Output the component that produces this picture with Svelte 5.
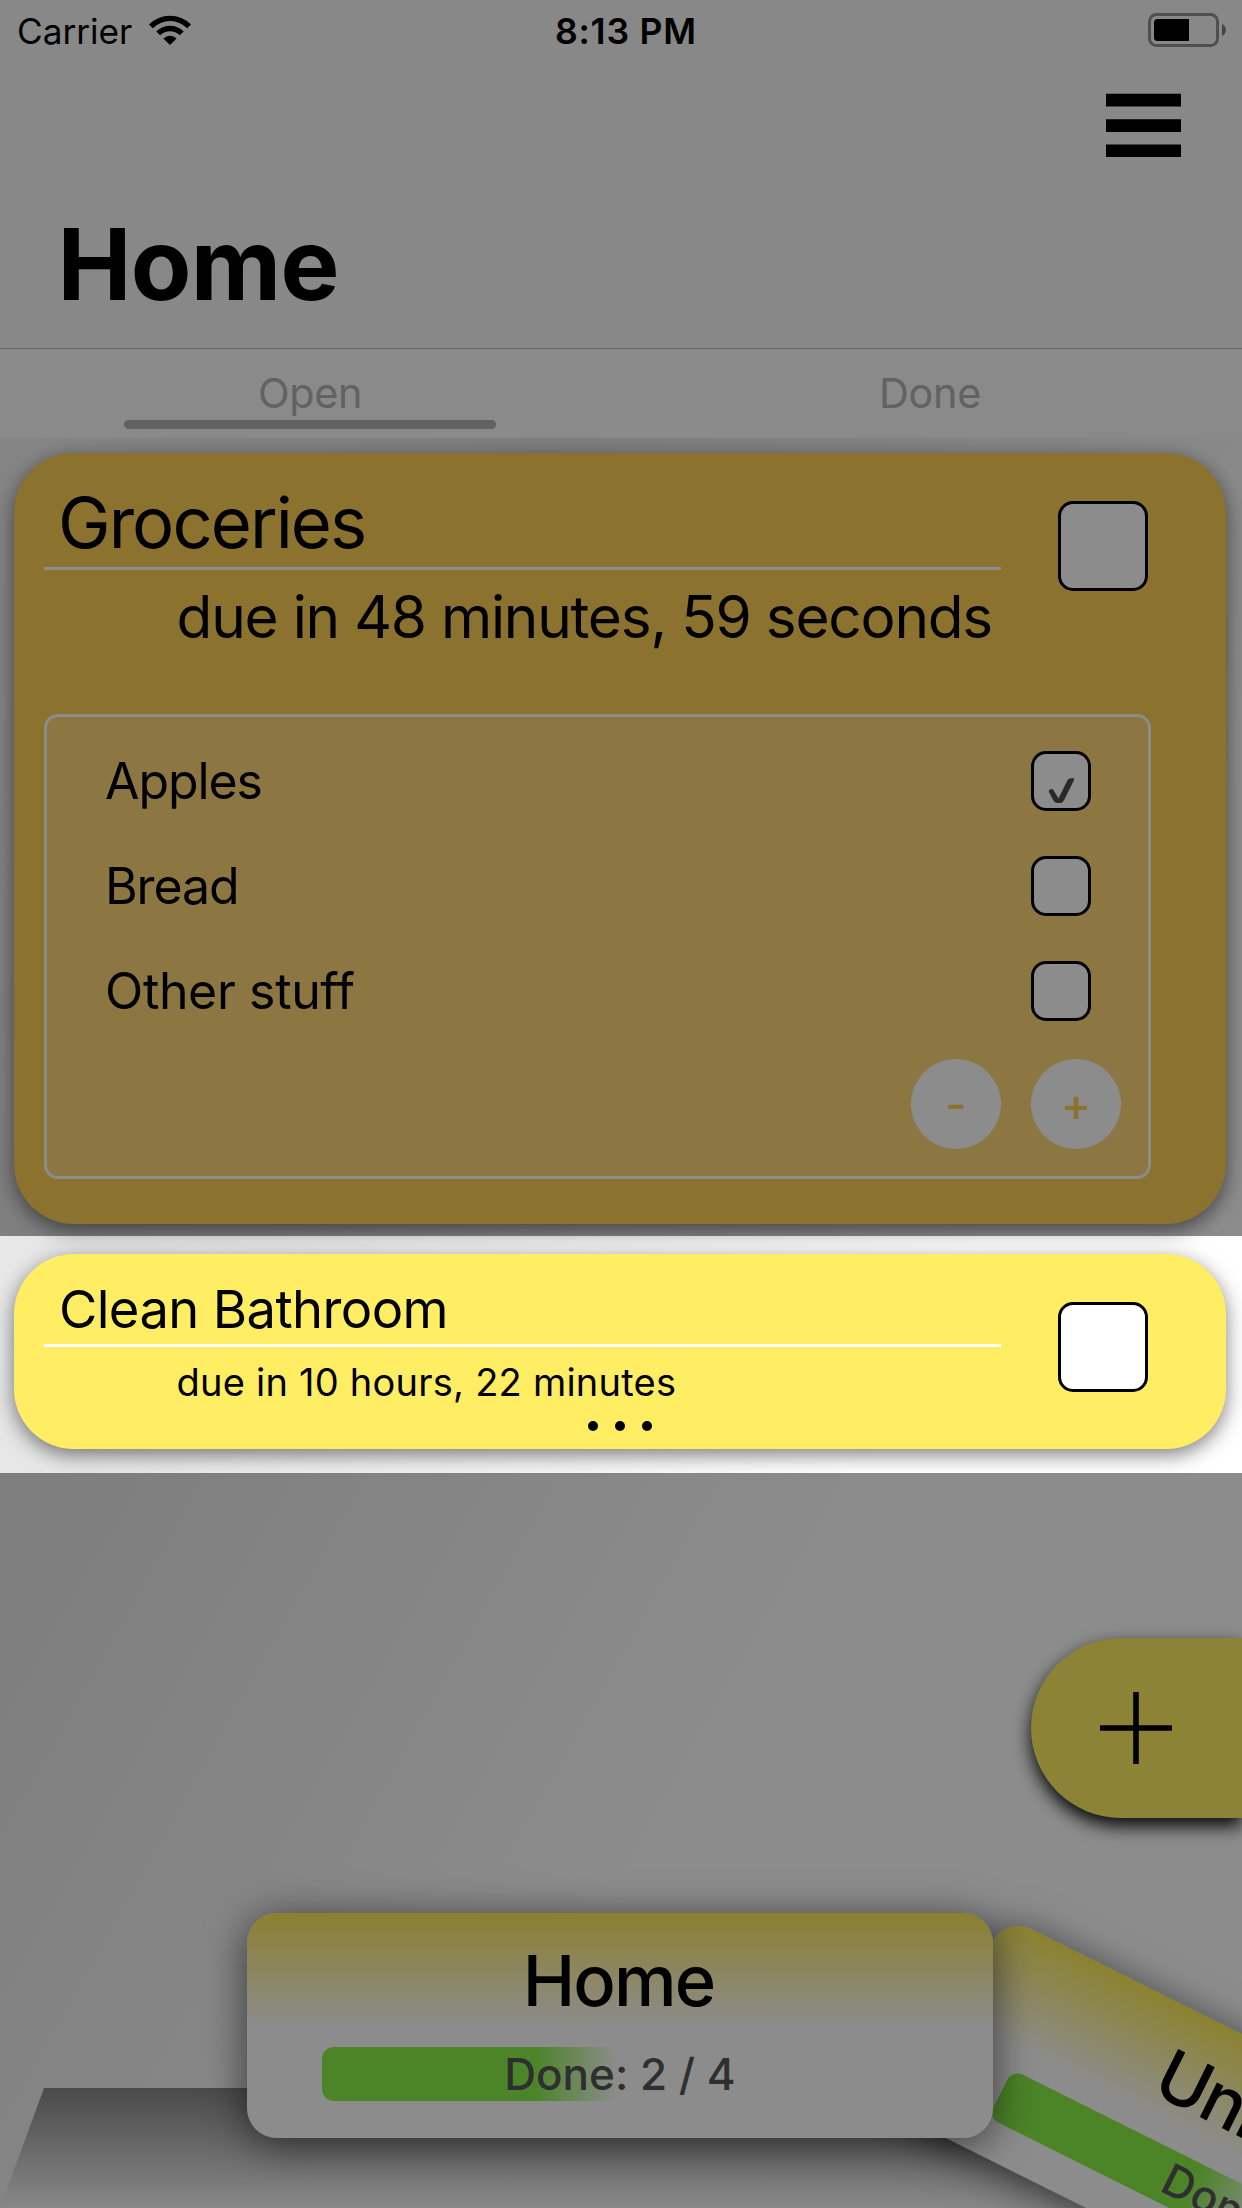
<script>
  const tasks = [
    {
      title: 'Groceries',
      due: 'due in 48 minutes, 59 seconds',
      kind: 'urgent',
      subtasks: [
        { name: 'Apples', done: true },
        { name: 'Bread', done: false },
        { name: 'Other stuff', done: false },
      ],
    },
    { title: 'Clean Bathroom', due: 'due in 10 hours, 22 minutes', kind: 'relaxed', subtasks: [] },
  ];
</script>

<div class="phone">
  <header>
    <div class="status">
      <div class="carrier">
        <span>Carrier</span>
        <svg class="wifi" width="44" height="62" viewBox="0 0 44 62">
          <path d="M1 24.5 A29.5 29.5 0 0 1 43 24.5 L39.2 28.3 A24.2 24.2 0 0 0 4.8 28.3Z" />
          <path d="M8.3 31.4 A19.5 19.5 0 0 1 35.7 31.4 L31.8 35.3 A14 14 0 0 0 12.2 35.3Z" />
          <path d="M15.4 38.4 A9.6 9.6 0 0 1 28.6 38.4 L22 45Z" />
        </svg>
      </div>
      <span class="time">8:13 PM</span>
      <svg class="battery" width="80" height="62" viewBox="0 0 80 62">
        <rect x="1.5" y="14.5" width="68" height="31" rx="7" fill="none" stroke="#909090" stroke-width="3" />
        <path d="M41 19 H9.5 A3.5 3.5 0 0 0 6 22.5 V37.5 A3.5 3.5 0 0 0 9.5 41 H41Z" />
        <path d="M74 24 A6.6 6.6 0 0 1 74 36Z" fill="#808080" />
      </svg>
    </div>
    <svg class="menu" width="75" height="64" viewBox="0 0 75 64">
      <path d="M0 .7H75V13.4H0ZM0 26.2H75V38.9H0ZM0 51.5H75V64H0Z" />
    </svg>
    <h1>Home</h1>
  </header>

  <nav>
    <span class="tab active">Open</span>
    <span class="tab">Done</span>
  </nav>

  <main>
    {#each tasks as task}
      <article class="task {task.kind}">
        <div class="head">
          <div class="text">
            <h2>{task.title}</h2>
            <p>{task.due}</p>
          </div>
          <span class="box"></span>
        </div>
        {#if task.subtasks.length}
          <section class="subtasks">
            {#each task.subtasks as sub}
              <div class="sub">
                <span class="name">{sub.name}</span>
                <span class="box small">
                  {#if sub.done}
                    <svg width="30" height="30" viewBox="0 0 30 30">
                      <path d="M1.6 15.2 Q2.2 13 4.5 13 Q6 13 6.6 14.2 L11.5 22.4 L20.2 4.8 Q21.3 2.3 23.5 2.3 H27.4 L26.8 4.6 L17.4 23.4 Q15.6 27 12.8 27 H10.6 Q8.2 27 6.6 25Z" />
                    </svg>
                  {/if}
                </span>
              </div>
            {/each}
            <div class="actions">
              <button>-</button>
              <button>+</button>
            </div>
          </section>
        {:else}
          <div class="more"><i></i><i></i><i></i></div>
        {/if}
      </article>
    {/each}
  </main>

  <div class="floor"></div>

  <div class="fab">
    <svg width="72" height="72" viewBox="0 0 72 72">
      <path d="M0 36H72M36 0V72" stroke="#000" stroke-width="5.6" />
    </svg>
  </div>

  <div class="list tilted">
    <h3>University</h3>
    <div class="progress"><div class="fill"></div><span>Done: 1 / 2</span></div>
  </div>
  <div class="list current">
    <h3>Home</h3>
    <div class="progress"><div class="fill"></div><span>Done: 2 / 4</span></div>
  </div>

  <div class="spotlight"></div>
</div>

<style>
  :global(body) {
    margin: 0;
  }
  .phone {
    position: relative;
    width: 1242px;
    height: 2208px;
    overflow: hidden;
    box-sizing: border-box;
    font-family: Inter, 'Liberation Sans', sans-serif;
    color: #000;
    background: linear-gradient(to bottom right, #f8f8f8 0%, #e6e6e6 32%, #e9e9e9 40%, #fff 68%);
  }
  h1, h2, h3, p {
    margin: 0;
    font-weight: 400;
    white-space: nowrap;
  }
  svg {
    display: block;
  }

  header {
    display: flex;
    flex-direction: column;
    height: 348px;
    background: #f7f7f7;
    border-bottom: 1px solid #b4b4b4;
  }
  .status {
    display: grid;
    grid-template-columns: 555px 1fr 94px;
    height: 62px;
    font-size: 35.2px;
    line-height: 62px;
  }
  .carrier {
    display: flex;
    gap: 15.7px;
    padding-left: 17px;
  }
  .time {
    font-weight: 600;
    font-size: 35.6px;
    line-height: 64px;
    letter-spacing: 0.75px;
  }
  .menu {
    align-self: flex-end;
    margin: 31px 61px 0 0;
  }
  h1 {
    margin-top: 47px;
    padding-left: 57.4px;
    font-size: 99px;
    font-weight: 700;
    line-height: 120px;
    letter-spacing: -0.6px;
  }

  nav {
    display: grid;
    grid-template-columns: 1fr 1fr;
    width: 1240px;
    padding-right: 2px;
    height: 89px;
    background: #fbfbfb;
  }
  .tab {
    position: relative;
    text-align: center;
    font-size: 41.3px;
    line-height: 88px;
    letter-spacing: -0.3px;
    color: #b2b2b2;
  }
  .tab.active::after {
    content: '';
    position: absolute;
    left: 20%;
    right: 20%;
    bottom: 9px;
    height: 9px;
    border-radius: 5px;
    background: #b2b2b2;
  }

  main {
    display: flex;
    flex-direction: column;
    gap: 30px;
    padding: 15px 16px 0 14px;
  }
  .task {
    box-sizing: border-box;
    padding-left: 30px;
    border-radius: 60px;
    box-shadow: 0 6px 20px rgba(0, 0, 0, 0.5);
  }
  .urgent {
    height: 771px;
    background: #ffcf57;
  }
  .relaxed {
    height: 195px;
    background: #ffee63;
  }
  .head {
    display: flex;
    align-items: flex-start;
    gap: 57px;
  }
  .text {
    width: 957px;
  }
  .text h2 {
    border-bottom: 3px solid #fff;
  }
  .urgent h2 {
    padding: 27px 0 2px 14px;
    font-size: 70.5px;
    line-height: 85px;
    letter-spacing: -1.93px;
  }
  .relaxed h2 {
    padding: 24px 0 3px 15px;
    font-size: 52.5px;
    line-height: 63px;
    letter-spacing: -0.6px;
  }
  .urgent p {
    padding: 11px 0 0 132.6px;
    font-size: 58.5px;
    line-height: 72px;
    letter-spacing: -1.23px;
  }
  .relaxed p {
    padding: 12px 0 0 132.5px;
    font-size: 38px;
    line-height: 46px;
    letter-spacing: 0.23px;
  }
  .box {
    box-sizing: border-box;
    flex: none;
    width: 90px;
    height: 90px;
    margin-top: 48px;
    border: 3px solid #000;
    border-radius: 15px;
    background: #fff;
  }
  .subtasks {
    box-sizing: border-box;
    width: 1107px;
    height: 465px;
    margin-top: 61px;
    padding-top: 12px;
    border: 3px solid #fff;
    border-radius: 14px;
    background: #ffd878;
  }
  .sub {
    display: flex;
    justify-content: space-between;
    height: 105px;
    padding: 0 57px 0 58px;
  }
  .name {
    font-size: 50px;
    line-height: 104px;
    letter-spacing: -1.1px;
  }
  .sub:nth-child(3) .name {
    letter-spacing: -0.35px;
  }
  .small {
    width: 60px;
    height: 60px;
    margin-top: 22px;
  }
  .small svg {
    margin: 22px 0 0 13px;
    fill: #4c4c4c;
  }
  .actions {
    display: flex;
    justify-content: flex-end;
    gap: 30px;
    padding: 15px 27px 0 0;
  }
  button {
    width: 90px;
    height: 90px;
    padding: 0 0 1px;
    border: 0;
    border-radius: 50%;
    background: #fff;
    color: #ffcf57;
    font: 500 46px/90px Inter, sans-serif;
  }
  .more {
    display: flex;
    justify-content: center;
    gap: 17px;
    margin: 16px 0 0 -30px;
  }
  .more i {
    width: 10px;
    height: 10px;
    border-radius: 50%;
    background: #000;
  }

  .floor {
    position: absolute;
    left: 0;
    top: 2088px;
    width: 1242px;
    height: 120px;
    background: linear-gradient(#888, #f7f7f7);
    clip-path: polygon(44px 0, 1198px 0, 100% 100%, 0 100%);
  }
  .fab {
    position: absolute;
    left: 1031px;
    top: 1638px;
    width: 211px;
    height: 180px;
    box-sizing: border-box;
    padding: 54px 0 0 69px;
    border-radius: 90px 0 0 90px;
    background: #ffee63;
    box-shadow: 0 8px 18px rgba(0, 0, 0, 0.95);
  }

  .list {
    position: absolute;
    box-sizing: border-box;
    width: 746px;
    height: 225px;
    padding: 24px 75px 0;
    border-radius: 30px;
    text-align: center;
    box-shadow: 0 6px 42px rgba(0, 0, 0, 0.6);
  }
  .current {
    left: 247px;
    top: 1913px;
    background: linear-gradient(#ffe957, #fff 50%);
  }
  .tilted {
    left: 1005px;
    top: 1916px;
    background: linear-gradient(#ffee57, #fff 50%);
    transform: rotate(26.5deg);
    transform-origin: 0 0;
  }
  h3 {
    margin-left: -3px;
    font-size: 70.5px;
    font-weight: 500;
    line-height: 87px;
    letter-spacing: -1.9px;
  }
  .progress {
    display: grid;
    height: 54px;
    margin-top: 23px;
  }
  .progress > * {
    grid-area: 1 / 1;
  }
  .fill {
    width: 50%;
    border-radius: 12px;
    background: linear-gradient(90deg, #8af04a 0 71%, rgba(255, 255, 255, 0) 99%);
  }
  .progress span {
    font-size: 44px;
    font-weight: 500;
    line-height: 54px;
    color: #575757;
  }
  .tilted h3,
  .tilted span {
    margin-left: -6px;
  }

  /* Dims everything except the highlighted task row. */
  .spotlight {
    position: absolute;
    left: 0;
    top: 1236px;
    width: 1242px;
    height: 237px;
    box-shadow: 0 0 0 2208px rgba(0, 0, 0, 0.45);
  }
</style>
